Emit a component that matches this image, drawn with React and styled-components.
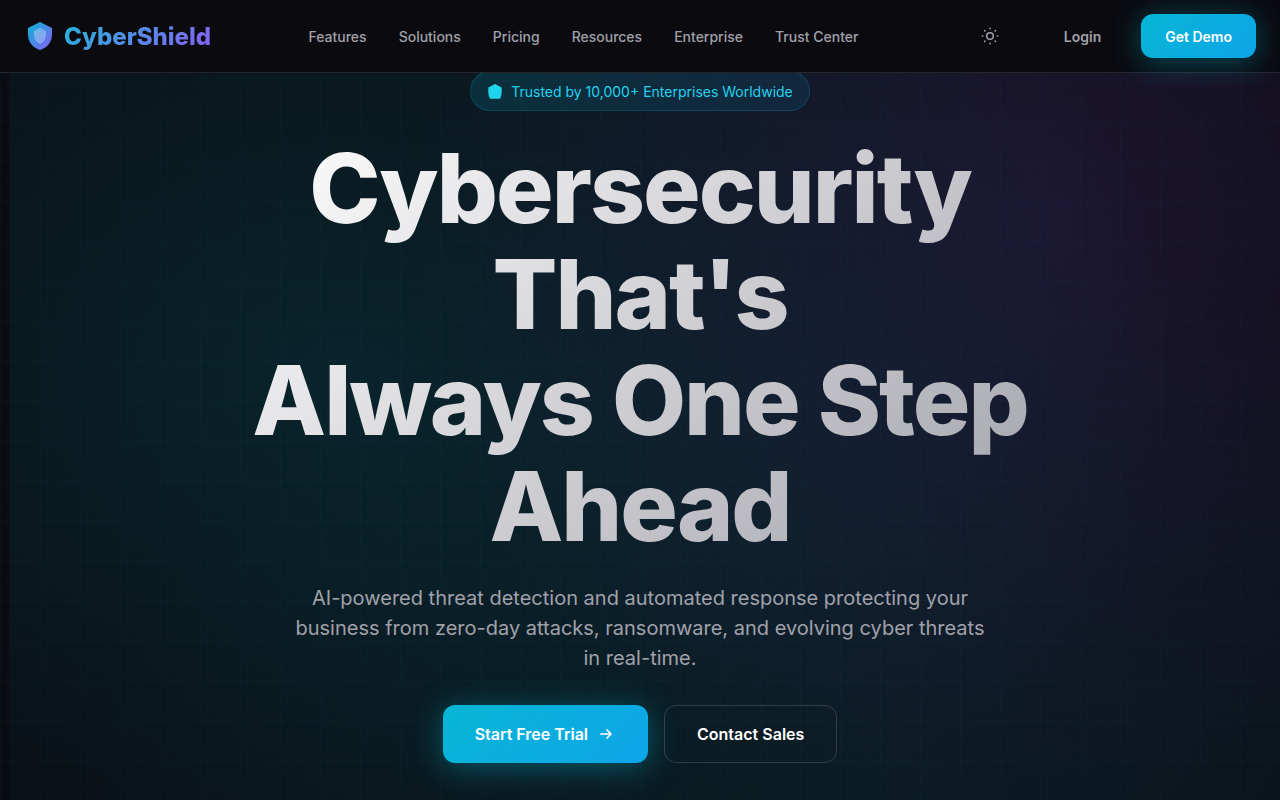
import React from 'react'
import styled, { createGlobalStyle } from 'styled-components'

const GlobalStyle = createGlobalStyle`
  * {
    box-sizing: border-box;
  }
  body {
    margin: 0;
    background: #0a0a0f;
    color: white;
    font-family: Inter, 'Liberation Sans', sans-serif;
  }
`

const Header = styled.header`
  position: sticky;
  top: 0;
  z-index: 10;
  display: flex;
  align-items: center;
  justify-content: space-between;
  height: 73px;
  padding: 0 24px;
  background: #0a0a0f;
  border-bottom: 1px solid #25262d;
`

const Logo = styled.a`
  display: flex;
  align-items: center;
  gap: 8px;
  color: white;
  text-decoration: none;
`

const LogoText = styled.span`
  padding-top: 2px;
  font-size: 24px;
  font-weight: 800;
  line-height: 40px;
  background: linear-gradient(135deg, #22b8d8 0%, #8b5cf6 100%);
  background-clip: text;
  color: transparent;
`

const Nav = styled.nav`
  display: flex;
  gap: 32px;
`

const NavLink = styled.a`
  padding-top: 2px;
  color: #a1a1aa;
  font-size: 14px;
  font-weight: 500;
  line-height: 24px;
  text-decoration: none;
`

const Actions = styled.div`
  display: flex;
  align-items: center;
  gap: 16px;
`

const IconButton = styled.button`
  display: flex;
  padding: 12px 24px;
  border: none;
  background: transparent;
  color: #a1a1aa;
`

const Button = styled.button`
  display: flex;
  align-items: center;
  gap: 8px;
  height: ${({ $large }) => $large ? '58px' : '44px'};
  padding: 0 ${({ $large }) => $large ? '32px' : '24px'};
  border: none;
  border-radius: 12px;
  font-family: inherit;
  font-size: ${({ $large }) => $large ? '16px' : '14px'};
  font-weight: 600;
  cursor: pointer;
`

const PrimaryButton = styled(Button)`
  color: white;
  background: linear-gradient(135deg, #06b6d4 0%, #0ea5e9 100%);
  box-shadow: 0 4px 32px rgba(6, 182, 212, 0.4);
`

const OutlineButton = styled(Button)`
  color: white;
  background: transparent;
  border: 1px solid rgba(255, 255, 255, 0.15);
`

const GhostButton = styled(Button)`
  color: #a1a1aa;
  background: transparent;
`

const Hero = styled.main`
  display: flex;
  flex-direction: column;
  align-items: center;
  min-height: calc(100vh - 73px);
  padding: 0 24px 37px;
  text-align: center;
  background:
    linear-gradient(rgba(6, 182, 212, 0.03) 1px, transparent 1px) 0 7px / 40px 40px,
    linear-gradient(90deg, rgba(6, 182, 212, 0.03) 1px, transparent 1px) 0 0 / 40px 40px,
    linear-gradient(90deg, rgba(10, 10, 15, 0.8) 9px, transparent 10px),
    radial-gradient(65% 90% at 27% 42%, rgba(6, 182, 212, 0.15) 0%, transparent 100%),
    radial-gradient(50% 90% at 82% 20%, rgba(139, 92, 246, 0.14) 0%, transparent 100%),
    radial-gradient(70% 80% at 75% 105%, rgba(6, 182, 212, 0.09) 0%, transparent 100%),
    #0a0a0f;
`

const Badge = styled.div`
  display: flex;
  align-items: center;
  gap: 8px;
  height: 40px;
  margin-top: -2px;
  padding: 0 16px;
  border: 1px solid rgba(6, 182, 212, 0.2);
  border-radius: 20px;
  background: linear-gradient(135deg, rgba(6, 182, 212, 0.15) 0%, rgba(14, 165, 233, 0.1) 100%);
  color: #22d3ee;
  font-size: 14px;
`

const Title = styled.h1`
  max-width: 800px;
  margin: 24px 0;
  font-size: 96px;
  font-weight: 800;
  line-height: 106px;
  letter-spacing: -2px;
  background: linear-gradient(135deg, #ffffff 0%, #a1a1aa 100%);
  background-clip: text;
  color: transparent;
`

const Subtitle = styled.p`
  max-width: 700px;
  margin: 0 0 32px;
  color: #a1a1aa;
  font-size: 20px;
  line-height: 30px;
`

const ButtonRow = styled.div`
  display: flex;
  gap: 16px;
`

const links = ['Features', 'Solutions', 'Pricing', 'Resources', 'Enterprise', 'Trust Center']

const LogoIcon = () => (
  <svg width='32' height='32' viewBox='0 0 32 32' aria-hidden='true'>
    <defs>
      <linearGradient id='shield' x1='0' y1='0' x2='1' y2='1'>
        <stop offset='0' stopColor='#06b6d4' />
        <stop offset='1' stopColor='#8b5cf6' />
      </linearGradient>
    </defs>
    <path d='M16 2L4 8V15C4 22 9 28 16 30C23 28 28 22 28 15V8Z' fill='url(#shield)' />
    <path d='M16 8L10 11V15C10 19 12 22 16 24C20 22 22 19 22 15V11Z' fill='white' fillOpacity='0.3' />
  </svg>
)

const SunIcon = () => (
  <svg width='20' height='20' viewBox='0 0 20 20' fill='none' stroke='currentColor' strokeWidth='1.5' strokeLinecap='round' aria-hidden='true'>
    <circle cx='10' cy='10' r='3.3' />
    <path d='M10 2.3V2.8M10 17.2V17.7M2.3 10H2.8M17.2 10H17.7M4.6 4.6L4.9 4.9M15.1 15.1L15.4 15.4M4.6 15.4L4.9 15.1M15.1 4.9L15.4 4.6' />
  </svg>
)

const BadgeIcon = () => (
  <svg width='16' height='16' viewBox='0 0 16 16' fill='currentColor' aria-hidden='true'>
    <path d='M8 1L1.3 4.5V8C1.3 11 1.8 13.5 3 15.7H13C14.2 13.5 14.7 11 14.7 8V4.5Z' />
  </svg>
)

const ArrowIcon = () => (
  <svg width='20' height='20' viewBox='0 0 20 20' fill='none' stroke='currentColor' strokeWidth='1.7' strokeLinecap='round' strokeLinejoin='round' aria-hidden='true'>
    <path d='M5 10H15M11 6L15 10L11 14' />
  </svg>
)

export default () => (
  <>
    <GlobalStyle />
    <Header>
      <Logo href='#'>
        <LogoIcon />
        <LogoText>CyberShield</LogoText>
      </Logo>
      <Nav>
        {links.map(link => <NavLink key={link} href='#'>{link}</NavLink>)}
      </Nav>
      <Actions>
        <IconButton aria-label='Toggle theme'><SunIcon /></IconButton>
        <GhostButton>Login</GhostButton>
        <PrimaryButton>Get Demo</PrimaryButton>
      </Actions>
    </Header>
    <Hero>
      <Badge>
        <BadgeIcon />
        <span>Trusted by 10,000+ Enterprises Worldwide</span>
      </Badge>
      <Title>Cybersecurity That's<br />Always One Step Ahead</Title>
      <Subtitle>
        AI-powered threat detection and automated response protecting your business from zero-day attacks, ransomware, and evolving cyber threats in real-time.
      </Subtitle>
      <ButtonRow>
        <PrimaryButton $large>Start Free Trial <ArrowIcon /></PrimaryButton>
        <OutlineButton $large>Contact Sales</OutlineButton>
      </ButtonRow>
    </Hero>
  </>
)
